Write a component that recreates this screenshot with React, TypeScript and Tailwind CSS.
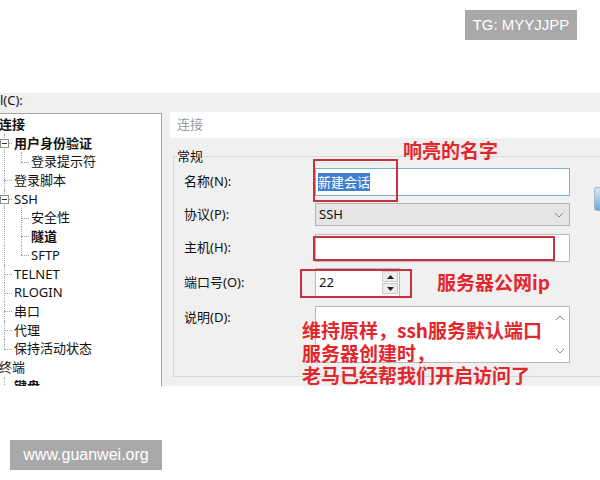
import React from "react";

const ui = { fontFamily: '"Noto Sans", "Noto Sans CJK SC", sans-serif' };
const cjkBold = { fontFamily: '"Noto Sans CJK SC", "Noto Sans", sans-serif' };

type Node = {
  label: string;
  level: 0 | 1 | 2;
  bold?: boolean;
  expander?: boolean;
  last?: boolean;
};

const treeItems: Node[] = [
  { label: "连接", level: 0, bold: true },
  { label: "用户身份验证", level: 1, bold: true, expander: true },
  { label: "登录提示符", level: 2, last: true },
  { label: "登录脚本", level: 1 },
  { label: "SSH", level: 1, expander: true },
  { label: "安全性", level: 2 },
  { label: "隧道", level: 2, bold: true },
  { label: "SFTP", level: 2, last: true },
  { label: "TELNET", level: 1 },
  { label: "RLOGIN", level: 1 },
  { label: "串口", level: 1 },
  { label: "代理", level: 1 },
  { label: "保持活动状态", level: 1, last: true },
  { label: "终端", level: 0 },
  { label: "键盘", level: 1, bold: true },
];

const Connector = ({ last, expander, l1 }: { last?: boolean; expander?: boolean; l1?: boolean }) => (
  <div className={"relative h-full shrink-0 " + (l1 ? "w-[14px]" : "w-[17px]")}>
    <div
      className={
        "absolute top-0 border-l border-dotted border-[#a0a0a0] " +
        (l1 ? "left-[4px] " : "left-[7px] ") +
        (last ? "h-1/2" : "bottom-0")
      }
    />
    <div
      className={
        "absolute top-1/2 w-[8px] border-t border-dotted border-[#a0a0a0] " + (l1 ? "left-[4px]" : "left-[7px]")
      }
    />
    {expander && (
      <div className="absolute left-[0px] top-1/2 -mt-[4px] w-[9px] h-[9px] border border-[#919191] bg-white flex items-center justify-center">
        <div className="w-[5px] h-px bg-[#333]" />
      </div>
    )}
  </div>
);

const TreeRows = () => (
  <div className="flex flex-col pt-[1px]">
    {treeItems.map((it, i) => (
      <div key={i} className="flex h-[18.7px] items-stretch">
        {it.level === 1 && <Connector l1 expander={it.expander} last={it.last} />}
        {it.level === 2 && (
          <>
            <div className="relative w-[14px] shrink-0">
              <div className="absolute left-[4px] top-0 bottom-0 border-l border-dotted border-[#a0a0a0]" />
            </div>
            <Connector last={it.last} />
          </>
        )}
        <span
          className={
            "leading-[18.7px] text-[13px] text-[#111] " +
            (it.bold ? "font-bold " : "") +
            (it.level === 0 ? "-ml-[1px]" : "")
          }
        >
          {it.label}
        </span>
      </div>
    ))}
  </div>
);

const Chevron = ({ up }: { up?: boolean }) => (
  <svg width="10" height="6" viewBox="0 0 10 6" className="block">
    <path d={up ? "M1 5 L5 1 L9 5" : "M1 1 L5 5 L9 1"} fill="none" stroke="#8a8a8a" strokeWidth="1" />
  </svg>
);

const Triangle = ({ up }: { up?: boolean }) => (
  <svg width="7" height="4" viewBox="0 0 7 4" className="block">
    <path d={up ? "M0 4 L3.5 0 L7 4 Z" : "M0 0 L3.5 4 L7 0 Z"} fill="#222" />
  </svg>
);

const Row = ({ label, h, mt, top, children }: { label: string; h: number; mt: number; top?: boolean; children: React.ReactNode }) => (
  <div className={"flex " + (top ? "items-start" : "items-center")} style={{ height: h, marginTop: mt }}>
    <div className={"w-[141px] shrink-0 pl-[10px] text-[13px] text-[#111] " + (top ? "pt-[2px]" : "")}>{label}</div>
    {children}
  </div>
);

export default function App() {
  return (
    <div className="w-[600px] h-[480px] bg-white flex flex-col overflow-hidden" style={ui}>
      {/* watermark top */}
      <div className="h-[93px] shrink-0 flex justify-end pr-[23px] pt-[10px]">
        <div
          className="h-[30px] w-[112px] bg-[#a9a9a9] text-white text-[15px] flex items-center justify-center"
          style={{ fontFamily: '"Liberation Sans", sans-serif' }}
        >
          TG: MYYJJPP
        </div>
      </div>

      {/* dialog screenshot */}
      <div className="relative h-[293px] shrink-0 bg-[#f0f0f0] overflow-hidden">
        <div className="h-[19px] text-[13px] leading-[14px] text-[#111]">l(C):</div>

        <div className="flex items-start">
          <div className="w-[162px] h-[300px] shrink-0 mt-[1px] bg-white border border-l-0 border-[#a5a5a5]">
            <TreeRows />
          </div>

          <div className="flex-1 ml-[8px] flex flex-col">
            <div className="h-[26px] bg-white text-[13px] text-[#9b9b9b] flex items-center pl-[7px]">连接</div>

            <fieldset className="mt-[10px] ml-[3px] w-[440px] border border-[#d8d8d8] pb-[13px]">
              <legend className="ml-[3px] text-[13px] leading-[17px] text-[#111] px-0">常规</legend>
              <div className="flex pt-[3px]">
                <div className="flex flex-col">
                  <Row label="名称(N):" h={28} mt={0}>
                    <div className="w-[255px] h-full bg-white border border-[#7ab3d0] flex items-center pl-[2px]">
                      <span className="bg-[#3e7fcf] text-white text-[13px] leading-[18px]">新建会话</span>
                    </div>
                  </Row>
                  <Row label="协议(P):" h={23} mt={7}>
                    <div className="w-[255px] h-full bg-[#e5e5e5] border border-[#b4b4b4] flex items-center justify-between pl-[3px] pr-[5px]">
                      <span className="text-[13px] text-[#111]">SSH</span>
                      <Chevron />
                    </div>
                  </Row>
                  <Row label="主机(H):" h={28} mt={8}>
                    <div className="w-[255px] h-full bg-white border border-[#b8b8b8]" />
                  </Row>
                  <Row label="端口号(O):" h={29} mt={6}>
                    <div className="w-[85px] h-full bg-white border border-[#b8b8b8] flex items-center pl-[3px]">
                      <span className="flex-1 text-[13px] text-[#111]">22</span>
                      <div className="w-[16px] flex flex-col gap-[1px] mr-[1px]">
                        <div className="h-[11px] bg-[#ececec] border border-[#c9c9c9] flex items-center justify-center">
                          <Triangle up />
                        </div>
                        <div className="h-[11px] bg-[#ececec] border border-[#c9c9c9] flex items-center justify-center">
                          <Triangle />
                        </div>
                      </div>
                    </div>
                  </Row>
                  <Row label="说明(D):" h={57} mt={9} top>
                    <div className="w-[255px] h-full bg-white border border-[#b8b8b8] flex justify-end pr-[4px] py-[8px]">
                      <div className="flex flex-col justify-between">
                        <Chevron up />
                        <Chevron />
                      </div>
                    </div>
                  </Row>
                </div>
                <div className="ml-[24px] mt-[19px] w-[12px] h-[24px] rounded-[3px] border border-[#9fb6c8] bg-gradient-to-b from-[#d9ecf8] to-[#6fa6d2]" />
              </div>
            </fieldset>
          </div>
        </div>

        {/* red annotations over the dialog */}
        <div className="absolute left-[313px] top-[66px] w-[85px] h-[43px] border-2 border-[#c8333b]" />
        <div className="absolute left-[313px] top-[143px] w-[242px] h-[25px] border-2 border-[#c8333b]" />
        <div className="absolute left-[300px] top-[176px] w-[112px] h-[29px] border-2 border-[#c8333b]" />

        <div className="absolute left-[403px] top-[45px] text-[19px] leading-[24px] font-bold text-[#e2262c]" style={cjkBold}>
          响亮的名字
        </div>
        <div className="absolute left-[437px] top-[177px] text-[19px] leading-[24px] font-bold text-[#e2262c]" style={cjkBold}>
          服务器公网ip
        </div>
        <div className="absolute left-[302px] top-[226px] text-[19px] leading-[22.5px] font-bold text-[#e2262c]" style={cjkBold}>
          <div>维持原样，ssh服务默认端口</div>
          <div>服务器创建时，</div>
          <div>老马已经帮我们开启访问了</div>
        </div>
      </div>

      {/* watermark bottom */}
      <div className="pt-[54px] pl-[10px]">
        <div
          className="h-[30px] w-[152px] bg-[#a9a9a9] text-white text-[16px] flex items-center justify-center"
          style={{ fontFamily: '"Liberation Sans", sans-serif' }}
        >
          www.guanwei.org
        </div>
      </div>
    </div>
  );
}
